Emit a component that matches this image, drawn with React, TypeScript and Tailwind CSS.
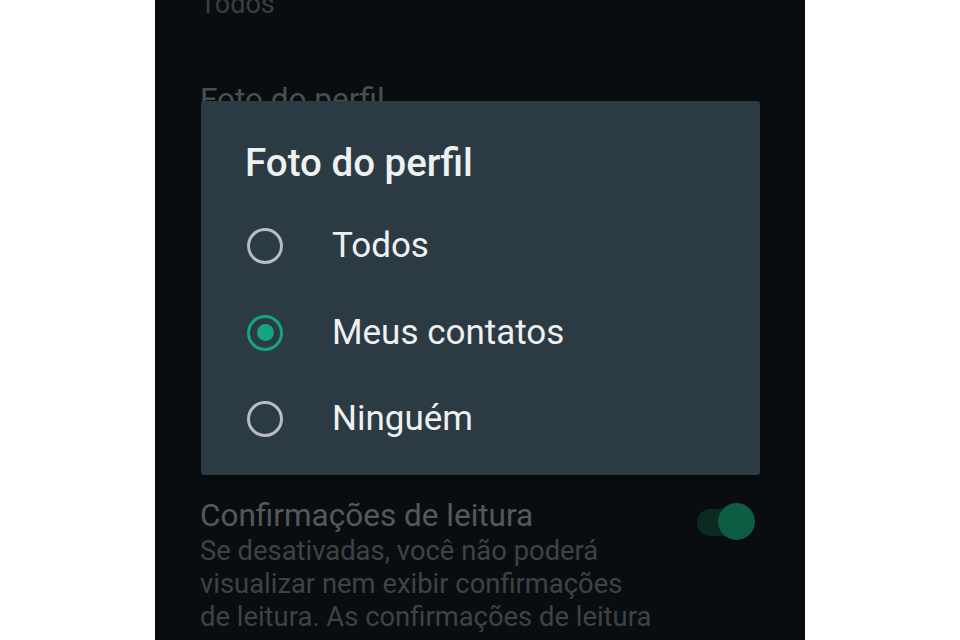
import React from "react";

function Radio({ checked }: { checked?: boolean }) {
  return (
    <div
      className={
        "w-[36px] h-[36px] rounded-full border-[3px] flex items-center justify-center shrink-0 " +
        (checked ? "border-[#14a57f]" : "border-[#b7bdc0]")
      }
    >
      {checked && <div className="w-[17px] h-[17px] rounded-full bg-[#14a57f]" />}
    </div>
  );
}

export default function App() {
  const opts = [
    { label: "Todos", checked: false },
    { label: "Meus contatos", checked: true },
    { label: "Ninguém", checked: false },
  ];
  return (
    <div
      className="w-[960px] h-[640px] bg-white flex justify-center overflow-hidden"
      style={{ fontFamily: "Roboto, 'Noto Sans', sans-serif" }}
    >
      <div className="relative w-[650px] h-[640px] bg-[#0a0d10] overflow-hidden">
        <div className="flex flex-col pl-[45px] pr-[50px]">
          <div className="mt-[-13px] text-[27px] leading-[34px] text-[#3a3d40]">Todos</div>
          <div className="mt-[61px] text-[31.5px] leading-[36px] text-[#4b4e51]">Foto do perfil</div>
          <div className="h-[379px]" />
          <div className="flex items-center justify-between">
            <div className="text-[31.5px] leading-[38px] text-[#55585b]">Confirmações de leitura</div>
            <div className="relative w-[58px] h-[38px] mt-[6px] mb-[-6px] flex items-center">
              <div className="w-[52px] h-[27px] rounded-full bg-[#0d2a22]" />
              <div className="absolute right-0 top-0 w-[37px] h-[37px] rounded-full bg-[#0d5d45]" />
            </div>
          </div>
          <div className="mt-[0px] text-[27.4px] leading-[33px] text-[#3f4245]">
            Se desativadas, você não poderá
            <br />
            visualizar nem exibir confirmações
            <br />
            de leitura. As confirmações de leitura
          </div>
        </div>

        <div className="absolute left-[46px] top-[101px] w-[559px] h-[374px] bg-[#2c3a43] rounded-[3px] shadow-lg">
          <div className="pl-[44px] pt-[40px] text-[38.5px] leading-[44px] font-medium text-[#eef1f2]">
            Foto do perfil
          </div>
          <div className="mt-[18px] flex flex-col">
            {opts.map((o) => (
              <div key={o.label} className="h-[86.5px] flex items-center pl-[46px]">
                <Radio checked={o.checked} />
                <span className="ml-[49px] text-[35px] text-[#eef1f2]">{o.label}</span>
              </div>
            ))}
          </div>
        </div>
      </div>
    </div>
  );
}
